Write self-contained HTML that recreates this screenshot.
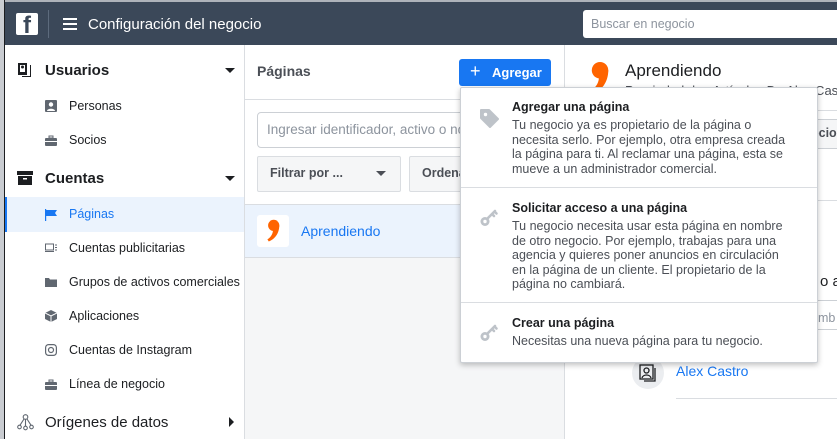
<!DOCTYPE html>
<html><head><meta charset="utf-8"><style>
*{box-sizing:border-box;margin:0;padding:0}
body{width:837px;height:439px;overflow:hidden;position:relative;font-family:"Liberation Sans",Helvetica,Arial,sans-serif;background:#fff;color:#1c1e21}
.a{position:absolute}
.t{position:absolute;white-space:nowrap}
.side .t{font-size:12.5px;color:#1c1e21}
.ic{position:absolute;width:12px;height:12px}
.dd p{font-size:12.5px;color:#4b4f56;line-height:14.5px;white-space:nowrap}
.dd h4{font-size:12.5px;font-weight:bold;color:#1c1e21;line-height:16px;margin-bottom:3px}
</style></head><body>
<div class="a" style="left:0;top:0;width:5px;height:439px;background:#c9ccd1"></div>
<div class="a" style="left:4px;top:0;width:1px;height:439px;background:#1c1e21"></div>
<div class="a" style="left:5px;top:0;width:832px;height:2px;background:#aeb3ba"></div>
<!-- header -->
<div class="a" style="left:5px;top:2px;width:832px;height:43px;background:#3b4859"></div>
<div class="a" style="left:16px;top:13px;width:22px;height:22px;background:#fff;border-radius:2px;overflow:hidden">
<div class="t" style="left:7px;top:-1px;font-size:24px;font-weight:bold;color:#3b4859;font-family:'Liberation Sans',sans-serif">f</div></div>
<div class="a" style="left:48px;top:10px;width:1px;height:28px;background:#5d6b7d"></div>
<div class="a" style="left:63px;top:18px;width:14px;height:2px;background:#fff"></div>
<div class="a" style="left:63px;top:23px;width:14px;height:2px;background:#fff"></div>
<div class="a" style="left:63px;top:28px;width:14px;height:2px;background:#fff"></div>
<div class="t" style="left:88px;top:16px;font-size:15px;color:#fff">Configuración del negocio</div>
<div class="a" style="left:583px;top:10px;width:260px;height:28px;background:#fff;border-radius:3px"></div>
<div class="t" style="left:591px;top:17px;font-size:12.5px;color:#8d949e">Buscar en negocio</div>
<!-- sidebar -->
<div class="side">
<svg class="a" style="left:17px;top:62px" width="16" height="16" viewBox="0 0 16 16"><path d="M1 1h9v12H1z" fill="#1c1e21"/><path d="M3 3h5v7H3z" fill="#fff"/><circle cx="5.5" cy="5" r="1.5" fill="#1c1e21"/><path d="M11 3h3v12H5v-1h8V3z" fill="#1c1e21"/></svg>
<div class="t" style="left:45px;top:62px;font-size:15px;font-weight:bold">Usuarios</div>
<div class="a" style="left:225px;top:68px;border:5px solid transparent;border-top:5px solid #1c1e21;border-bottom:0"></div>
<svg class="ic" style="left:45px;top:100px" viewBox="0 0 12 12"><rect width="12" height="12" rx="1" fill="#606770"/><circle cx="6" cy="4.5" r="2.2" fill="#fff"/><path d="M2 11c0-3 8-3 8 0z" fill="#fff"/></svg>
<div class="t" style="left:69px;top:99px">Personas</div>
<svg class="ic" style="left:45px;top:135px" viewBox="0 0 12 12"><path d="M4 1h4v2H4z" fill="none" stroke="#606770"/><rect y="3" width="12" height="8" rx="1" fill="#606770"/><rect x="0" y="6" width="12" height="1" fill="#fff"/></svg>
<div class="t" style="left:69px;top:133px">Socios</div>
<svg class="a" style="left:17px;top:171px" width="16" height="14" viewBox="0 0 16 14"><rect width="16" height="4" fill="#1c1e21"/><rect x="1" y="5" width="14" height="9" fill="#1c1e21"/><rect x="6" y="7" width="4" height="1.5" fill="#fff"/></svg>
<div class="t" style="left:45px;top:170px;font-size:15px;font-weight:bold">Cuentas</div>
<div class="a" style="left:225px;top:176px;border:5px solid transparent;border-top:5px solid #1c1e21;border-bottom:0"></div>
<div class="a" style="left:5px;top:197px;width:239px;height:35px;background:#ebf3fd"></div>
<div class="a" style="left:5px;top:197px;width:2px;height:35px;background:#1877f2"></div>
<svg class="ic" style="left:45px;top:209px" viewBox="0 0 12 12"><rect x="0" y="0" width="1.2" height="12" fill="#1877f2"/><path d="M1 1h11l-2 3 2 3H1z" fill="#1877f2"/></svg>
<div class="t" style="left:69px;top:207px;color:#1877f2">Páginas</div>
<svg class="ic" style="left:45px;top:242px" viewBox="0 0 12 12"><rect x="0.5" y="2" width="8" height="6" fill="none" stroke="#606770"/><path d="M0 9.5h9" stroke="#606770"/><path d="M10 3h2M10 5.5h2M10 8h2" stroke="#606770"/></svg>
<div class="t" style="left:69px;top:241px">Cuentas publicitarias</div>
<svg class="ic" style="left:45px;top:276px" viewBox="0 0 12 12"><path d="M0 2h4l1 1.5h7V11H0z" fill="#606770"/></svg>
<div class="t" style="left:69px;top:275px">Grupos de activos comerciales</div>
<svg class="ic" style="left:45px;top:310px" viewBox="0 0 12 12"><path d="M6 0l6 3v6l-6 3-6-3V3z" fill="#606770"/><path d="M0 3l6 3 6-3M6 6v6" stroke="#fff" fill="none"/></svg>
<div class="t" style="left:69px;top:309px">Aplicaciones</div>
<svg class="ic" style="left:45px;top:344px" viewBox="0 0 12 12"><rect x="0.6" y="0.6" width="10.8" height="10.8" rx="3" fill="none" stroke="#606770" stroke-width="1.2"/><circle cx="6" cy="6" r="2.5" fill="none" stroke="#606770" stroke-width="1.2"/></svg>
<div class="t" style="left:69px;top:343px">Cuentas de Instagram</div>
<svg class="ic" style="left:45px;top:379px" viewBox="0 0 12 12"><path d="M4 1h4v2H4z" fill="none" stroke="#606770"/><rect y="3" width="12" height="8" rx="1" fill="#606770"/><rect x="0" y="6" width="12" height="1" fill="#fff"/></svg>
<div class="t" style="left:69px;top:377px">Línea de negocio</div>
<svg class="a" style="left:17px;top:414px" width="17" height="17" viewBox="0 0 17 17"><g fill="none" stroke="#606770" stroke-width="1.1"><circle cx="8.5" cy="3" r="2.3"/><circle cx="2.5" cy="13" r="1.8"/><circle cx="8.5" cy="14" r="1.8"/><circle cx="14.5" cy="13" r="1.8"/><path d="M8.5 5.3v6.9M7 5l-4 6.2M10 5l4 6.2"/></g></svg>
<div class="t" style="left:45px;top:414px;font-size:15px;color:#1c1e21">Orígenes de datos</div>
<div class="a" style="left:229px;top:417px;border:5px solid transparent;border-left:5px solid #1c1e21;border-right:0"></div>
</div>
<div class="a" style="left:244px;top:45px;width:1px;height:394px;background:#dadde1"></div>
<!-- middle -->
<div class="a" style="left:245px;top:204px;width:320px;height:235px;background:#f5f6f7"></div>
<div class="t" style="left:257px;top:63px;font-size:14px;font-weight:bold;color:#4b4f56">Páginas</div>
<div class="a" style="left:245px;top:99px;width:320px;height:1px;background:#dadde1"></div>
<div class="a" style="left:257px;top:112px;width:300px;height:36px;border:1px solid #ccd0d5;border-radius:4px;background:#fff"></div>
<div class="t" style="left:267px;top:122px;font-size:13.5px;color:#8d949e">Ingresar identificador, activo o nombre</div>
<div class="a" style="left:257px;top:156px;width:144px;height:36px;border:1px solid #dadde1;border-radius:2px;background:#f5f6f7"></div>
<div class="t" style="left:270px;top:166px;font-size:12.5px;font-weight:bold;color:#4b4f56">Filtrar por ...</div>
<div class="a" style="left:376px;top:171px;border:5px solid transparent;border-top:5px solid #4b4f56;border-bottom:0"></div>
<div class="a" style="left:409px;top:156px;width:150px;height:36px;border:1px solid #dadde1;border-radius:2px;background:#f5f6f7"></div>
<div class="t" style="left:422px;top:166px;font-size:12.5px;font-weight:bold;color:#4b4f56">Ordenar</div>
<div class="a" style="left:245px;top:204px;width:320px;height:54px;background:#ebf3fd;border-top:1px solid #dadde1;border-bottom:1px solid #dadde1"></div>
<div class="a" style="left:257px;top:215px;width:32px;height:32px;background:#fff;border-radius:3px"></div>
<svg class="a" style="left:266px;top:218px" width="14" height="26" viewBox="0 0 20 32"><circle cx="11" cy="8" r="8" fill="#ff6400"/><path d="M19 8C19 20 12 28 4 31L2 28C8 24 10 19 10 14Z" fill="#ff6400"/></svg>
<div class="t" style="left:301px;top:223px;font-size:14px;color:#1877f2">Aprendiendo</div>
<div class="a" style="left:459px;top:59px;width:92px;height:27px;background:#1877f2;border-radius:3px"></div>
<div class="t" style="left:470px;top:61px;font-size:18px;color:#fff">+</div>
<div class="t" style="left:492px;top:65px;font-size:13px;font-weight:bold;color:#fff">Agregar</div>
<div class="a" style="left:564px;top:45px;width:1px;height:394px;background:#dadde1"></div>
<!-- right -->
<svg class="a" style="left:588px;top:62px" width="22" height="33" viewBox="0 0 20 32"><circle cx="11" cy="8" r="8" fill="#ff6400"/><path d="M19 8C19 20 12 28 4 31L2 28C8 24 10 19 10 14Z" fill="#ff6400"/></svg>
<div class="t" style="left:625px;top:61px;font-size:17px;color:#1c1e21">Aprendiendo</div>
<div class="t" style="left:625px;top:83px;font-size:13px;color:#4b4f56">Propiedad de : Artículos De Alex Castro</div>
<div class="a" style="left:565px;top:110px;width:272px;height:1px;background:#dadde1"></div>
<div class="a" style="left:800px;top:119px;width:40px;height:30px;border:1px solid #ccd0d5;background:#f5f6f7"></div>
<div class="t" style="left:811px;top:126px;font-size:12.5px;font-weight:bold;color:#4b4f56">ocio</div>
<div class="a" style="left:565px;top:200px;width:272px;height:1px;background:#dadde1"></div>
<div class="t" style="left:820px;top:273px;font-size:15px;color:#1c1e21">o a</div>
<div class="a" style="left:800px;top:300px;width:40px;height:30px;border:1px solid #ccd0d5"></div>
<div class="t" style="left:818px;top:311px;font-size:12.5px;color:#8d949e">mb</div>
<div class="a" style="left:632px;top:357px;width:32px;height:32px;border-radius:50%;background:#ebedf0"></div>
<svg class="a" style="left:638px;top:363px" width="20" height="20" viewBox="0 0 20 20"><g fill="none" stroke="#1c1e21" stroke-width="1.3"><rect x="2" y="2" width="13" height="14"/><circle cx="8.5" cy="7.5" r="2.5"/><path d="M4 15c1-4 8-4 9 0M17 5v13H6"/></g></svg>
<div class="t" style="left:676px;top:363px;font-size:14px;color:#1877f2">Alex Castro</div>
<div class="a" style="left:676px;top:398px;width:161px;height:1px;background:#dadde1"></div>
<!-- dropdown -->
<div class="a dd" style="left:460px;top:87px;width:358px;height:276px;background:#fff;border:1px solid #ccd0d5;border-radius:2px;box-shadow:0 2px 6px rgba(0,0,0,.25)">
<svg class="a" style="left:17px;top:19px" width="22" height="22" viewBox="0 0 22 22"><path d="M3 3h8l9 9-8 8-9-9z" fill="#bec3c9" stroke="#bec3c9" stroke-width="2" stroke-linejoin="round"/><circle cx="7.5" cy="7.5" r="1.7" fill="#fff"/></svg>
<div class="a" style="left:51px;top:11px"><h4>Agregar una página</h4><p>Tu negocio ya es propietario de la página o<br>necesita serlo. Por ejemplo, otra empresa creada<br>la página para ti. Al reclamar una página, esta se<br>mueve a un administrador comercial.</p></div>
<div class="a" style="left:0;top:99px;width:356px;height:1px;background:#dadde1"></div>
<svg class="a" style="left:18px;top:120px" width="20" height="20" viewBox="0 0 20 20"><circle cx="6" cy="13.5" r="4.5" fill="#bec3c9"/><circle cx="6" cy="13.5" r="1.7" fill="#fff"/><path d="M8 11l8-8M13 6l2 2M15.5 3.5l2 2" stroke="#bec3c9" stroke-width="2.6" stroke-linecap="round"/></svg>
<div class="a" style="left:51px;top:112px"><h4>Solicitar acceso a una página</h4><p>Tu negocio necesita usar esta página en nombre<br>de otro negocio. Por ejemplo, trabajas para una<br>agencia y quieres poner anuncios en circulación<br>en la página de un cliente. El propietario de la<br>página no cambiará.</p></div>
<div class="a" style="left:0;top:214px;width:356px;height:1px;background:#dadde1"></div>
<svg class="a" style="left:18px;top:235px" width="20" height="20" viewBox="0 0 20 20"><circle cx="6" cy="13.5" r="4.5" fill="#bec3c9"/><circle cx="6" cy="13.5" r="1.7" fill="#fff"/><path d="M8 11l8-8M13 6l2 2M15.5 3.5l2 2" stroke="#bec3c9" stroke-width="2.6" stroke-linecap="round"/></svg>
<div class="a" style="left:51px;top:227px"><h4>Crear una página</h4><p>Necesitas una nueva página para tu negocio.</p></div>
</div>
</body></html>
